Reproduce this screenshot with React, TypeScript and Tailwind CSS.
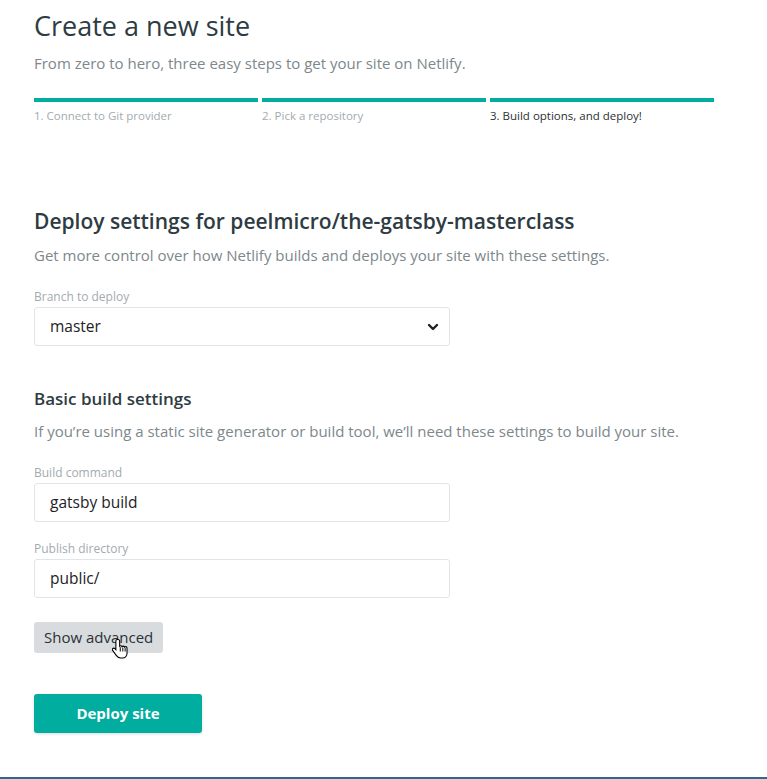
import React from 'react';

const FONT = { fontFamily: '"Open Sans", "Noto Sans", sans-serif' };

const steps = [
  { label: '1. Connect to Git provider', active: false },
  { label: '2. Pick a repository', active: false },
  { label: '3. Build options, and deploy!', active: true },
];

const Field = ({ label, value, select }: { label: string; value: string; select?: boolean }) => (
  <div className="flex flex-col">
    <label className="text-[12px] leading-[16px] text-[#a3abaf] mb-[2px]">{label}</label>
    <div className="flex items-center justify-between w-[416px] h-[39px] border border-[#e2e5e7] rounded-[3px] pl-[15px] pr-[10px] bg-white">
      <span className="text-[15.5px] text-[#1c2226]">{value}</span>
      {select && (
        <svg width="12" height="10" viewBox="0 0 12 10">
          <path d="M2 3 L6 7 L10 3" stroke="#1c2226" strokeWidth="2.4" fill="none" strokeLinecap="round" strokeLinejoin="round" />
        </svg>
      )}
    </div>
  </div>
);

const HandCursor = () => (
  <svg className="absolute left-[78px] top-[16px]" width="18" height="22" viewBox="0 0 20 24">
    <path
      d="M6 1.5c-1 0-1.7.8-1.7 1.7v9.6l-1.1-1.2c-.7-.8-1.9-.8-2.5 0-.5.6-.5 1.4 0 2l4 5.5c1 1.5 2.6 2.9 5 2.9h2c3 0 5-2.3 5-5.2V11c0-.9-.8-1.6-1.6-1.6-.5 0-.9.2-1.2.5-.2-.7-.8-1.1-1.5-1.1-.5 0-1 .2-1.3.6-.3-.6-.8-1-1.5-1-.4 0-.8.1-1.1.4V3.2c0-.9-.7-1.7-1.6-1.7z"
      fill="#fff"
      stroke="#000"
      strokeWidth="1.2"
    />
    <path d="M9.2 10v4.8M12 10.4v4.4M14.6 11v3.8" stroke="#000" strokeWidth="1.1" />
  </svg>
);

export default function App() {
  return (
    <div className="min-h-[779px] bg-white relative" style={FONT}>
      <div className="pl-[34px] w-[714px] pt-[6px]">
        <h1 className="text-[27px] leading-[40px] text-[#2e3b42] font-normal">Create a new site</h1>
        <p className="text-[15px] leading-[22px] text-[#7d878c] mt-[6px]">
          From zero to hero, three easy steps to get your site on Netlify.
        </p>

        <div className="grid grid-cols-3 gap-[4px] mt-[24px]">
          {steps.map((s) => (
            <div key={s.label} className="flex flex-col">
              <div className="h-[4px] bg-[#00ad9f]" />
              <span
                className={
                  s.active
                    ? 'text-[11.5px] leading-[16px] mt-[6px] text-[#2b3134]'
                    : 'text-[11.5px] leading-[16px] mt-[6px] text-[#a3abaf]'
                }
              >
                {s.label}
              </span>
            </div>
          ))}
        </div>

        <h2 className="text-[21px] leading-[28px] font-semibold text-[#2e3b42] mt-[83px]">
          Deploy settings for peelmicro/the-gatsby-masterclass
        </h2>
        <p className="text-[15px] leading-[22px] text-[#7d878c] mt-[9px]">
          Get more control over how Netlify builds and deploys your site with these settings.
        </p>

        <div className="mt-[23px]">
          <Field label="Branch to deploy" value="master" select />
        </div>

        <h3 className="text-[17px] leading-[24px] font-semibold text-[#2e3b42] mt-[41px]">Basic build settings</h3>
        <p className="text-[15px] leading-[22px] text-[#7d878c] mt-[9px]">
          If you’re using a static site generator or build tool, we’ll need these settings to build your site.
        </p>

        <div className="mt-[23px] flex flex-col gap-[19px]">
          <Field label="Build command" value="gatsby build" />
          <Field label="Publish directory" value="public/" />
        </div>

        <div className="mt-[24px] relative w-fit">
          <button className="h-[31px] px-[10px] rounded-[3px] bg-[#d9dcdf] text-[15px] text-[#2b3134]">
            Show advanced
          </button>
          <HandCursor />
        </div>

        <button className="mt-[41px] w-[168px] h-[39px] rounded-[3px] bg-[#00ad9f] text-white text-[15px] font-bold shadow-[0_1px_3px_rgba(0,0,0,0.15)]">
          Deploy site
        </button>
      </div>
      <div className="absolute left-0 right-0 top-[777px] h-[2px] bg-[#2a6a8e]" />
    </div>
  );
}
